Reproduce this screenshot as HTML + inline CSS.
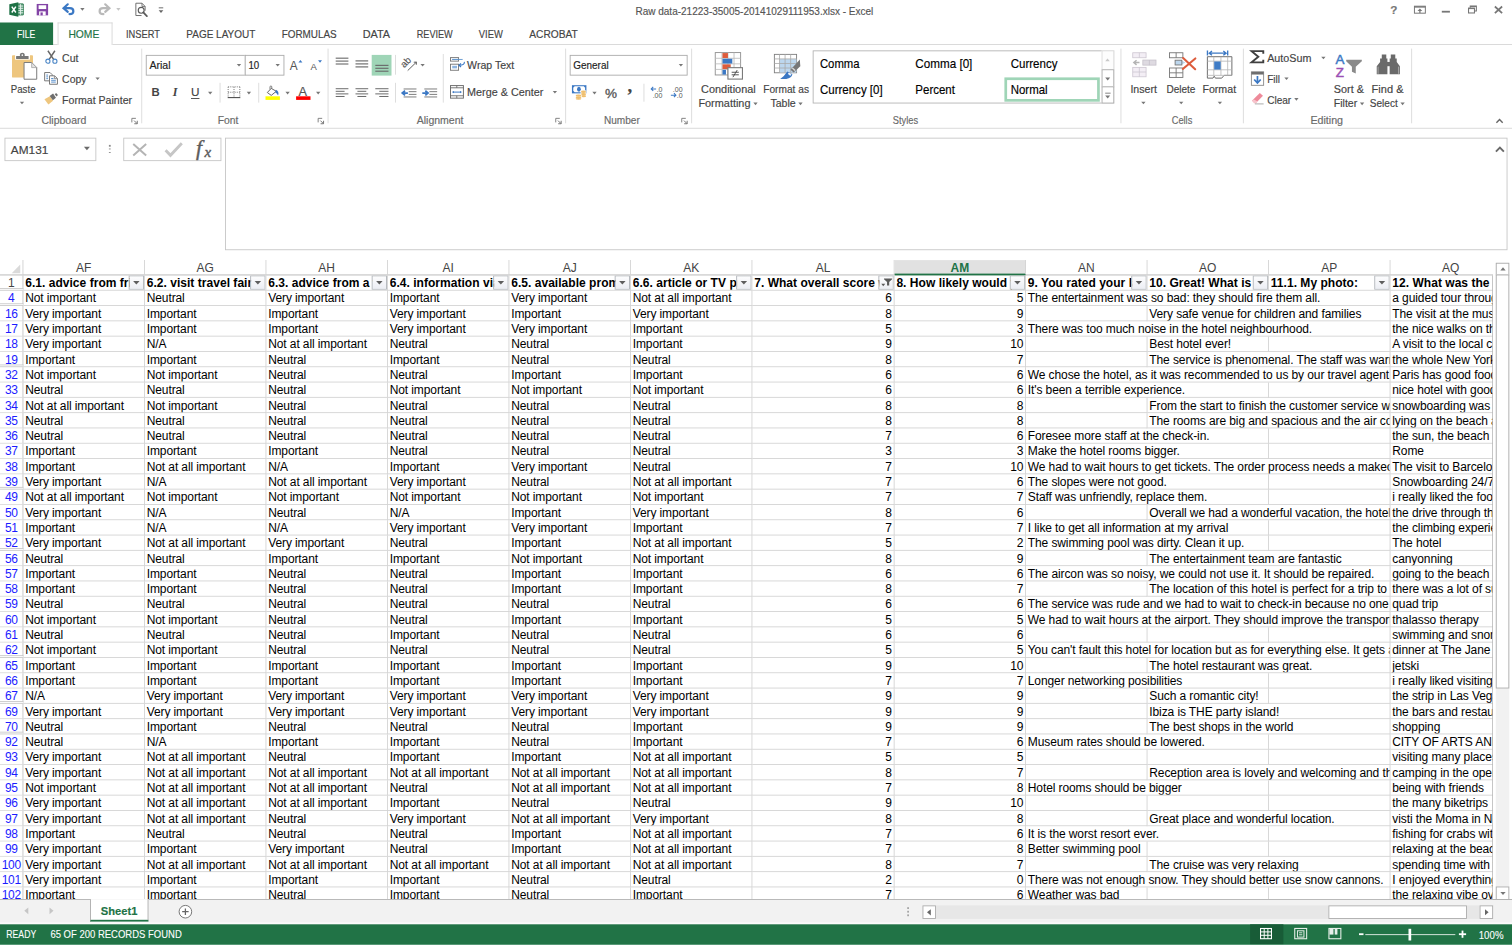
<!DOCTYPE html>
<html lang="en"><head><meta charset="utf-8"><title>Raw data-21223-35005-20141029111953.xlsx - Excel</title>
<style>
html,body{margin:0;padding:0;background:#fff;overflow:hidden}
body{width:1512px;height:945px;position:relative}
#app{position:absolute;left:0;top:0;width:1680px;height:1050px;transform:scale(0.9);transform-origin:0 0;background:#fff;font-family:"Liberation Sans",sans-serif;overflow:hidden}
.a{position:absolute}
.t{position:absolute;white-space:pre;line-height:1;-webkit-text-stroke:0.18px}
svg{overflow:visible}

.ch{box-sizing:border-box;border-right:1px solid #d4d4d4;border-bottom:1px solid #b4b4b4;font-size:13.33px;color:#444;text-align:center;line-height:18px}
.ch.sel{background:#e1e1e1;color:#217346;font-weight:bold;border-bottom:2px solid #217346}
.row{left:0;width:1680px;height:17px}
.rh{top:0;height:17px;box-sizing:border-box;border-right:1px solid #c4c4c4;border-bottom:1px solid #dcdcdc;font-size:13.33px;line-height:17px;text-align:center;color:#1c1cff;letter-spacing:-0.35px}
.rh.gap{border-bottom:3px double #cacaca}
.rh.one{color:#444}
.c{top:0;height:17px;box-sizing:border-box;border-right:1px solid #d4d4d4;border-bottom:1px solid #d4d4d4;font-size:13.33px;line-height:17px;color:#000;padding-left:2px;white-space:pre;overflow:hidden;letter-spacing:-0.11px}
.c.n{text-align:right;padding-right:2px}
.c.hd{font-weight:bold;letter-spacing:0.04px}
.ht{display:block;overflow:hidden;white-space:pre}
.fb{right:0;top:0;width:17px;height:16px;border:1px solid #b0b4ba;box-sizing:border-box;background:linear-gradient(#fdfdfe,#eceef4)}
.fb svg{display:block}
</style></head>
<body><div id="app">
<svg class="a" style="left:8.89px;top:1.11px" width="18.89" height="18.89" viewBox="8.00 1.00 17.00 17.00"><rect x="16.87" y="3.94" width="6.52" height="11.24" rx="0.6" fill="#5f9f7e" stroke="#1e7145" stroke-width="0.7"/><path d="M17.76 6.18L23.16 6.18M17.76 8.43L23.16 8.43M17.76 10.68L23.16 10.68M17.76 12.93L23.16 12.93M20.46 4.27L20.46 14.84" stroke="#e8f2ec" stroke-width="0.9" fill="none"/><polygon points="9.22,4.27 18.21,2.25 18.21,16.87 9.22,14.84" fill="#1e7145"/><path d="M11.69 6.75L15.74 12.59M15.74 6.75L11.69 12.59" stroke="#fff" stroke-width="1.5" fill="none"/></svg>
<svg class="a" style="left:40.00px;top:4.11px;" width="14.22" height="13.44" viewBox="0 0 14 14"><path d="M0.4 0.4H13.6V13.6H0.4Z" fill="#8344a6"/><rect x="2.6" y="1.9" width="8.8" height="4.4" fill="#fff"/><rect x="3.2" y="9" width="7.6" height="4.6" fill="#fff"/><rect x="4.8" y="10.2" width="2.6" height="3.4" fill="#8344a6"/></svg>
<svg class="a" style="left:68.89px;top:4.22px;" width="14.11" height="12.67" viewBox="0 0 14 13"><path d="M3.2 5.2H8.6C11.6 5.2 12.6 7.2 12.6 8.6C12.6 10.6 11 12 8.2 12" fill="none" stroke="#3b78c4" stroke-width="2.5" stroke-linecap="round"/><path d="M6.2 0.8L1.4 5.2L6.2 9.4" fill="none" stroke="#3b78c4" stroke-width="2.5" stroke-linecap="round" stroke-linejoin="miter"/></svg>
<svg class="a" style="left:89.11px;top:9.22px;" width="5.11" height="2.89" viewBox="0 0 10 6"><path d="M0 0H10L5 6Z" fill="#777"/></svg>
<svg class="a" style="left:108.89px;top:4.22px;" width="14.22" height="12.67" viewBox="0 0 14 13"><g transform="translate(14,0) scale(-1,1)"><path d="M3.2 5.2H8.6C11.6 5.2 12.6 7.2 12.6 8.6C12.6 10.6 11 12 8.2 12" fill="none" stroke="#b9b9b9" stroke-width="2.5" stroke-linecap="round"/><path d="M6.2 0.8L1.4 5.2L6.2 9.4" fill="none" stroke="#b9b9b9" stroke-width="2.5" stroke-linecap="round"/></g></svg>
<svg class="a" style="left:128.78px;top:9.22px;" width="5.11" height="2.89" viewBox="0 0 10 6"><path d="M0 0H10L5 6Z" fill="#c4c4c4"/></svg>
<svg class="a" style="left:149.67px;top:3.11px;" width="14.56" height="15.33" viewBox="0 0 14 15.5"><path d="M0.6 0.6H7.5L11 4.2V9M0.6 0.6V14.4H7" fill="none" stroke="#6e6e6e" stroke-width="1.1"/><path d="M7.5 0.6V4.2H11" fill="none" stroke="#6e6e6e" stroke-width="1"/><circle cx="6.6" cy="8.6" r="3.3" fill="#fff" stroke="#5a5a5a" stroke-width="1.3"/><path d="M9 11L13 15" stroke="#5a5a5a" stroke-width="2" stroke-linecap="round"/></svg>
<svg class="a" style="left:176.44px;top:7.78px;" width="5.78" height="7.11" viewBox="0 0 6 7"><rect x="0.4" y="0" width="5.2" height="1.1" fill="#666"/><path d="M0.3 3.2H5.7L3 6.4Z" fill="#666"/></svg>
<span class="t" style="left:706.33px;top:6.90px;font-size:12.00px;color:#555;transform:scaleX(0.9272);transform-origin:0 0;">Raw data-21223-35005-20141029111953.xlsx - Excel</span>
<span class="t" style="left:1544.67px;top:4.67px;font-size:13.00px;color:#777;font-weight:bold;">?</span>
<svg class="a" style="left:1571.11px;top:6.11px;" width="13.33" height="9.56" viewBox="0 0 13.4 9"><rect x="0.6" y="0.6" width="12.2" height="7.8" fill="none" stroke="#777" stroke-width="1.1"/><rect x="0.6" y="0.6" width="12.2" height="1.6" fill="#777"/><path d="M6.7 3.2L9.4 6H7.4V8.2H6V6H4Z" fill="#777"/></svg>
<div class="a " style="left:1602.22px;top:11.78px;width:9.11px;height:2.00px;background:#777"></div>
<svg class="a" style="left:1631.33px;top:6.22px;" width="10.00" height="9.22" viewBox="0 0 10 9.2"><path d="M2.6 2.6V0.8H9.4V6.2H7.4" fill="none" stroke="#777" stroke-width="1.2"/><rect x="0.7" y="3" width="6.6" height="5.4" fill="#fff" stroke="#777" stroke-width="1.2"/><rect x="0.7" y="2.8" width="6.6" height="1.3" fill="#777"/><rect x="2.6" y="0.6" width="6.8" height="1.2" fill="#777"/></svg>
<svg class="a" style="left:1660.44px;top:6.22px;" width="10.00" height="9.78" viewBox="0 0 9.3 8.6"><path d="M0.9 0.9L8.4 7.7M8.4 0.9L0.9 7.7" stroke="#777" stroke-width="1.8" fill="none"/></svg>
<div class="a " style="left:0.00px;top:49.00px;width:1680.00px;height:1.00px;background:#d6d6d6"></div>
<div class="a " style="left:0.00px;top:25.00px;width:58.89px;height:24.78px;background:#217346"></div>
<span class="t" style="left:19.44px;top:32.68px;font-size:11.27px;color:#fff;transform:scaleX(0.8400);transform-origin:0 0;">FILE</span>
<div class="a " style="left:63.56px;top:25.00px;width:61.11px;height:25.22px;background:#fff;border:1px solid #d6d6d6;border-bottom:none;box-sizing:border-box"></div>
<span class="t" style="left:76.44px;top:31.68px;font-size:12.00px;color:#217346;transform:scaleX(0.9537);transform-origin:0 0;">HOME</span>
<span class="t" style="left:139.78px;top:31.68px;font-size:12.00px;color:#444;transform:scaleX(0.8602);transform-origin:0 0;">INSERT</span>
<span class="t" style="left:206.89px;top:31.68px;font-size:12.00px;color:#444;transform:scaleX(0.9247);transform-origin:0 0;">PAGE LAYOUT</span>
<span class="t" style="left:312.89px;top:31.68px;font-size:12.00px;color:#444;transform:scaleX(0.9165);transform-origin:0 0;">FORMULAS</span>
<span class="t" style="left:402.89px;top:31.68px;font-size:12.00px;color:#444;transform:scaleX(1.0073);transform-origin:0 0;">DATA</span>
<span class="t" style="left:462.89px;top:31.68px;font-size:12.00px;color:#444;transform:scaleX(0.8450);transform-origin:0 0;">REVIEW</span>
<span class="t" style="left:531.78px;top:31.68px;font-size:12.00px;color:#444;transform:scaleX(0.8695);transform-origin:0 0;">VIEW</span>
<span class="t" style="left:587.78px;top:31.68px;font-size:12.00px;color:#444;transform:scaleX(0.9454);transform-origin:0 0;">ACROBAT</span>
<div class="a " style="left:0.00px;top:142.11px;width:1680.00px;height:1.11px;background:#d6d6d6"></div>
<svg class="a" style="left:11.11px;top:55.56px" width="32.22" height="34.44" viewBox="10.00 50.00 29.00 31.00"><rect x="12.11" y="54.80" width="20.99" height="22.35" rx="0.9" fill="#eec67e"/><rect x="15.16" y="54.13" width="14.90" height="5.08" fill="#fff"/><rect x="16.17" y="55.48" width="12.53" height="3.05" rx="0.5" fill="#777"/><path d="M20.03 56.16L20.03 53.99Q20.03 52.43 22.40 52.43Q24.77 52.43 24.77 53.99L24.77 56.16" fill="#777"/><circle cx="22.40" cy="54.67" r="0.85" fill="#fff"/><polygon points="24.16,62.12 31.75,62.12 36.83,67.20 36.83,78.84 24.16,78.84" fill="#fff" stroke="#7a7a7a" stroke-width="1"/><polygon points="31.75,62.12 31.75,67.20 36.83,67.20" fill="#e4e4e4" stroke="#9a9a9a" stroke-width="0.7"/></svg>
<span class="t" style="left:11.78px;top:92.56px;font-size:12.00px;color:#444;transform:scaleX(0.8944);transform-origin:0 0;">Paste</span>
<svg class="a" style="left:22.00px;top:113.33px;" width="4.89" height="2.89" viewBox="0 0 10 6"><path d="M0 0H10L5 6Z" fill="#777"/></svg>
<svg class="a" style="left:50.00px;top:56.33px;" width="14.22" height="14.78" viewBox="0 0 14.2 14.8"><path d="M3.2 0.4L9.6 10M11 0.4L4.6 10" stroke="#666" stroke-width="1.6" fill="none"/><circle cx="3.2" cy="12" r="2.3" fill="none" stroke="#4b86c6" stroke-width="1.2"/><circle cx="11" cy="12" r="2.3" fill="none" stroke="#4b86c6" stroke-width="1.2"/></svg>
<span class="t" style="left:68.56px;top:58.68px;font-size:12.00px;color:#444;transform:scaleX(0.9758);transform-origin:0 0;">Cut</span>
<svg class="a" style="left:48.78px;top:79.78px;" width="15.44" height="14.22" viewBox="0 0 15.4 14.2"><path d="M0.6 0.6H6.6L9 3V9.8H0.6Z" fill="#fff" stroke="#777" stroke-width="1.1"/><path d="M2.4 3.4H4.4M2.4 5.4H4.4M2.4 7.4H4.4" stroke="#4b86c6" stroke-width="1"/><path d="M6 4.2H11.6L14.8 7.2V13.6H6Z" fill="#fff" stroke="#777" stroke-width="1.1"/><path d="M11.4 4.4V7.4H14.6" fill="none" stroke="#777" stroke-width="0.9"/><path d="M7.8 7.2H10.4M7.8 9.2H13M7.8 11.2H13" stroke="#4b86c6" stroke-width="1"/></svg>
<span class="t" style="left:68.56px;top:81.90px;font-size:12.00px;color:#444;transform:scaleX(0.9678);transform-origin:0 0;">Copy</span>
<svg class="a" style="left:106.11px;top:86.11px;" width="4.89" height="2.89" viewBox="0 0 10 6"><path d="M0 0H10L5 6Z" fill="#777"/></svg>
<svg class="a" style="left:49.33px;top:103.22px;" width="15.89" height="13.33" viewBox="0 0 15.9 13.3"><path d="M0.4 7.2L6.4 4L10 9L4.8 13.2Z" fill="#eec67e"/><path d="M6.2 3.6L10 1L13.2 5.6L9.8 8.4Z" fill="#6e6e6e"/><path d="M11.8 1.8L13.4 0.4L15.4 2.6L13.8 4.2Z" fill="#6e6e6e"/></svg>
<span class="t" style="left:68.56px;top:104.90px;font-size:12.00px;color:#444;transform:scaleX(0.9800);transform-origin:0 0;">Format Painter</span>
<span class="t" style="left:45.67px;top:128.89px;font-size:11.20px;color:#6a6a6a;transform:scaleX(1.0429);transform-origin:0 0;">Clipboard</span>
<svg class="a" style="left:145.89px;top:131.33px;" width="7.00" height="7.00" viewBox="0 0 7 7"><path d="M0.5 5V0.5H5" fill="none" stroke="#777" stroke-width="1"/><path d="M3 3L6.4 6.4M6.5 3.2V6.5H3.2" fill="none" stroke="#777" stroke-width="1.1"/></svg>
<div class="a " style="left:156.94px;top:54.44px;width:1.00px;height:82.67px;background:#dadada"></div>
<div class="a " style="left:162.22px;top:61.33px;width:110.67px;height:22.56px;border:1px solid #ababab;box-sizing:border-box;background:#fff"></div>
<div class="a " style="left:271.78px;top:61.33px;width:44.00px;height:22.56px;border:1px solid #ababab;box-sizing:border-box;background:#fff"></div>
<span class="t" style="left:165.56px;top:66.79px;font-size:12.00px;color:#222;transform:scaleX(0.9812);transform-origin:0 0;">Arial</span>
<svg class="a" style="left:262.89px;top:71.11px;" width="5.11" height="2.89" viewBox="0 0 10 6"><path d="M0 0H10L5 6Z" fill="#777"/></svg>
<span class="t" style="left:275.78px;top:66.79px;font-size:12.00px;color:#222;transform:scaleX(0.8990);transform-origin:0 0;">10</span>
<svg class="a" style="left:305.89px;top:71.11px;" width="5.11" height="2.89" viewBox="0 0 10 6"><path d="M0 0H10L5 6Z" fill="#777"/></svg>
<svg class="a" style="left:322.22px;top:65.56px;" width="14.00" height="12.22" viewBox="0 0 14 12.2"><text x="0" y="12" font-size="13.2" fill="#555" font-family="Liberation Sans,sans-serif">A</text><path d="M9.6 3.4L11.8 0.6L14 3.4Z" fill="#3b78c4"/></svg>
<svg class="a" style="left:344.89px;top:65.56px;" width="12.89" height="12.22" viewBox="0 0 12.9 12.2"><text x="0" y="12" font-size="10.6" fill="#555" font-family="Liberation Sans,sans-serif">A</text><path d="M8.4 0.8H12.8L10.6 3.6Z" fill="#3b78c4"/></svg>
<span class="t" style="left:168.44px;top:96.57px;font-size:12.60px;color:#444;font-weight:bold;-webkit-text-stroke:0">B</span>
<span class="t" style="left:192.00px;top:95.57px;font-size:13.40px;color:#444;font-family:'Liberation Serif',serif;font-weight:bold;font-style:italic;-webkit-text-stroke:0">I</span>
<span class="t" style="left:212.22px;top:95.56px;font-size:13.00px;color:#444;text-decoration:underline;text-underline-offset:1.5px">U</span>
<svg class="a" style="left:230.89px;top:102.11px;" width="5.11" height="2.89" viewBox="0 0 10 6"><path d="M0 0H10L5 6Z" fill="#777"/></svg>
<div class="a " style="left:243.94px;top:92.22px;width:1.00px;height:21.33px;background:#dadada"></div>
<svg class="a" style="left:252.56px;top:95.67px;" width="14.00" height="13.00" viewBox="0 0 14 13"><path d="M0.5 0.5H13.5M0.5 6.5H13.5M0.5 0.5V12M7 0.5V12M13.5 0.5V12" fill="none" stroke="#787878" stroke-width="1.1" stroke-dasharray="1.1 1.3"/><path d="M0 12.4H14" stroke="#555" stroke-width="1.3"/></svg>
<svg class="a" style="left:273.89px;top:102.11px;" width="5.11" height="2.89" viewBox="0 0 10 6"><path d="M0 0H10L5 6Z" fill="#777"/></svg>
<div class="a " style="left:286.61px;top:92.22px;width:1.00px;height:21.33px;background:#dadada"></div>
<svg class="a" style="left:296.44px;top:94.89px;" width="14.89" height="11.33" viewBox="0 0 14.9 11.3"><path d="M5.4 3.2L1 7.8L5.4 11L11 6.4Z" fill="#fff" stroke="#666" stroke-width="1.1" stroke-linejoin="round"/><path d="M4 4.4V1.6Q4 0.5 5 0.5Q6 0.5 6 1.6V3.4" fill="none" stroke="#666" stroke-width="0.9"/><path d="M10.6 4.6Q14.6 6.6 13 11Q11.6 8.6 9.8 7.4Z" fill="#3b78c4"/></svg>
<div class="a " style="left:294.89px;top:106.89px;width:16.22px;height:3.78px;background:#ffff00"></div>
<svg class="a" style="left:317.00px;top:102.11px;" width="5.11" height="2.89" viewBox="0 0 10 6"><path d="M0 0H10L5 6Z" fill="#777"/></svg>
<span class="t" style="left:331.78px;top:95.12px;font-size:14.20px;color:#555;">A</span>
<div class="a " style="left:329.00px;top:106.89px;width:16.11px;height:3.78px;background:#ff0000"></div>
<svg class="a" style="left:351.00px;top:102.11px;" width="5.11" height="2.89" viewBox="0 0 10 6"><path d="M0 0H10L5 6Z" fill="#777"/></svg>
<span class="t" style="left:242.00px;top:128.89px;font-size:11.20px;color:#6a6a6a;transform:scaleX(1.0263);transform-origin:0 0;">Font</span>
<svg class="a" style="left:353.11px;top:131.33px;" width="7.00" height="7.00" viewBox="0 0 7 7"><path d="M0.5 5V0.5H5" fill="none" stroke="#777" stroke-width="1"/><path d="M3 3L6.4 6.4M6.5 3.2V6.5H3.2" fill="none" stroke="#777" stroke-width="1.1"/></svg>
<div class="a " style="left:363.94px;top:54.44px;width:1.00px;height:82.67px;background:#dadada"></div>
<svg class="a" style="left:373.11px;top:63.56px" width="14.11" height="7.78" viewBox="0 0 100 24.0" preserveAspectRatio="none"><path d="M0.0 2.0H100.0" stroke="#6c6c6c" stroke-width="3.9"/><path d="M0.0 12.0H100.0" stroke="#6c6c6c" stroke-width="3.9"/><path d="M0.0 22.0H100.0" stroke="#6c6c6c" stroke-width="3.9"/></svg>
<svg class="a" style="left:394.67px;top:67.44px" width="14.11" height="8.00" viewBox="0 0 100 24.0" preserveAspectRatio="none"><path d="M0.0 2.0H100.0" stroke="#6c6c6c" stroke-width="3.9"/><path d="M0.0 12.0H100.0" stroke="#6c6c6c" stroke-width="3.9"/><path d="M0.0 22.0H100.0" stroke="#6c6c6c" stroke-width="3.9"/></svg>
<div class="a " style="left:412.78px;top:60.89px;width:22.44px;height:23.22px;background:#9fd5b7"></div>
<svg class="a" style="left:416.67px;top:72.44px" width="14.67" height="7.78" viewBox="0 0 100 24.0" preserveAspectRatio="none"><path d="M0.0 2.0H100.0" stroke="#6a6a6a" stroke-width="3.9"/><path d="M0.0 12.0H100.0" stroke="#6a6a6a" stroke-width="3.9"/><path d="M0.0 22.0H100.0" stroke="#6a6a6a" stroke-width="3.9"/></svg>
<div class="a " style="left:439.06px;top:61.22px;width:1.00px;height:22.11px;background:#dadada"></div>
<svg class="a" style="left:444.44px;top:60.00px" width="22.22" height="22.22" viewBox="400.00 54.00 20.00 20.00"><text x="0" y="0" transform="translate(404.69,68.17) rotate(-45)" font-size="9.6" fill="#555" stroke="#555" stroke-width="0.15" style="font-family:'Liberation Sans',sans-serif">ab</text><path d="M408.11 70.57L416.69 62.23M414.17 62.23L416.80 62.11 416.69 64.74" stroke="#555" stroke-width="0.95" fill="none"/></svg>
<svg class="a" style="left:467.00px;top:70.78px;" width="5.11" height="2.89" viewBox="0 0 10 6"><path d="M0 0H10L5 6Z" fill="#777"/></svg>
<div class="a " style="left:492.06px;top:60.33px;width:1.00px;height:53.78px;background:#dadada"></div>
<svg class="a" style="left:498.89px;top:62.22px" width="20.00" height="17.78" viewBox="449.00 56.00 18.00 16.00"><rect x="450.40" y="57.83" width="8.06" height="3.49" fill="#fff" stroke="#727272" stroke-width="0.9"/><rect x="452.00" y="59.03" width="6.29" height="1.26" fill="#c5daf0"/><path d="M452.00 59.66L462.57 59.66" stroke="#4b86c6" stroke-width="0.8"/><rect x="450.40" y="64.40" width="8.06" height="6.06" fill="#fff" stroke="#727272" stroke-width="0.9"/><rect x="452.11" y="66.00" width="4.80" height="2.57" fill="#8db4e0"/><path d="M464.29 62.11Q464.69 65.31 459.31 65.43" stroke="#3b78c4" stroke-width="1.1" fill="none"/><path d="M460.91 63.71L458.97 65.43 460.91 67.14" stroke="#3b78c4" stroke-width="1.2" fill="none"/></svg>
<span class="t" style="left:519.44px;top:66.79px;font-size:12.00px;color:#444;transform:scaleX(0.9788);transform-origin:0 0;">Wrap Text</span>
<svg class="a" style="left:373.11px;top:98.00px" width="14.11" height="9.78" viewBox="0 0 100 34.0" preserveAspectRatio="none"><path d="M0.0 2.0H100.0" stroke="#6c6c6c" stroke-width="3.9"/><path d="M0.0 12.0H70.0" stroke="#6c6c6c" stroke-width="3.9"/><path d="M0.0 22.0H100.0" stroke="#6c6c6c" stroke-width="3.9"/><path d="M0.0 32.0H70.0" stroke="#6c6c6c" stroke-width="3.9"/></svg>
<svg class="a" style="left:394.67px;top:98.00px" width="14.11" height="9.78" viewBox="0 0 100 34.0" preserveAspectRatio="none"><path d="M0.0 2.0H100.0" stroke="#6c6c6c" stroke-width="3.9"/><path d="M15.0 12.0H85.0" stroke="#6c6c6c" stroke-width="3.9"/><path d="M0.0 22.0H100.0" stroke="#6c6c6c" stroke-width="3.9"/><path d="M15.0 32.0H85.0" stroke="#6c6c6c" stroke-width="3.9"/></svg>
<svg class="a" style="left:416.67px;top:98.00px" width="14.67" height="9.78" viewBox="0 0 100 34.0" preserveAspectRatio="none"><path d="M0.0 2.0H100.0" stroke="#6c6c6c" stroke-width="3.9"/><path d="M30.0 12.0H100.0" stroke="#6c6c6c" stroke-width="3.9"/><path d="M0.0 22.0H100.0" stroke="#6c6c6c" stroke-width="3.9"/><path d="M30.0 32.0H100.0" stroke="#6c6c6c" stroke-width="3.9"/></svg>
<div class="a " style="left:439.06px;top:92.11px;width:1.00px;height:22.00px;background:#dadada"></div>
<svg class="a" style="left:444.44px;top:95.56px" width="21.11" height="14.44" viewBox="400.00 86.00 19.00 13.00"><path d="M404.00 88.57L416.86 88.57M409.14 91.26L416.86 91.26M409.14 94.00L416.86 94.00M404.00 96.57L416.86 96.57" stroke="#777" stroke-width="0.95" fill="none"/><path d="M408.29 92.63L402.74 92.63M405.43 90.34L402.63 92.63 405.43 94.91" stroke="#3b78c4" stroke-width="1.7" fill="none"/></svg>
<svg class="a" style="left:466.67px;top:95.56px" width="21.11" height="14.44" viewBox="420.00 86.00 19.00 13.00"><path d="M424.00 88.57L436.86 88.57M429.14 91.26L436.86 91.26M429.14 94.00L436.86 94.00M424.00 96.57L436.86 96.57" stroke="#777" stroke-width="0.95" fill="none"/><path d="M422.00 92.63L427.54 92.63M425.03 90.34L427.77 92.63 425.03 94.91" stroke="#3b78c4" stroke-width="1.7" fill="none"/></svg>
<svg class="a" style="left:498.89px;top:93.33px" width="17.78" height="17.78" viewBox="449.00 84.00 16.00 16.00"><rect x="450.40" y="85.89" width="12.91" height="12.57" fill="#fff" stroke="#6a6a6a" stroke-width="0.95"/><path d="M450.40 88.11L463.31 88.11M450.40 96.06L463.31 96.06M456.69 85.89L456.69 88.11M456.69 96.06L456.69 98.46" stroke="#6a6a6a" stroke-width="0.9" fill="none"/><path d="M452.57 92.40L461.14 92.40" stroke="#3b78c4" stroke-width="1" fill="none"/><polygon points="452.00,92.40 453.83,91.26 453.83,93.54" fill="#3b78c4"/><polygon points="461.71,92.40 459.89,91.26 459.89,93.54" fill="#3b78c4"/></svg>
<span class="t" style="left:519.44px;top:97.45px;font-size:12.00px;color:#444;transform:scaleX(0.9995);transform-origin:0 0;">Merge &amp; Center</span>
<svg class="a" style="left:614.00px;top:101.44px;" width="5.11" height="2.89" viewBox="0 0 10 6"><path d="M0 0H10L5 6Z" fill="#777"/></svg>
<span class="t" style="left:462.56px;top:128.89px;font-size:11.20px;color:#6a6a6a;transform:scaleX(1.0441);transform-origin:0 0;">Alignment</span>
<svg class="a" style="left:616.78px;top:131.33px;" width="7.00" height="7.00" viewBox="0 0 7 7"><path d="M0.5 5V0.5H5" fill="none" stroke="#777" stroke-width="1"/><path d="M3 3L6.4 6.4M6.5 3.2V6.5H3.2" fill="none" stroke="#777" stroke-width="1.1"/></svg>
<div class="a " style="left:628.06px;top:54.44px;width:1.00px;height:82.67px;background:#dadada"></div>
<div class="a " style="left:633.22px;top:61.33px;width:130.78px;height:22.44px;border:1px solid #ababab;box-sizing:border-box;background:#fff"></div>
<span class="t" style="left:636.56px;top:66.79px;font-size:12.00px;color:#222;transform:scaleX(0.9187);transform-origin:0 0;">General</span>
<svg class="a" style="left:753.67px;top:71.11px;" width="5.11" height="2.89" viewBox="0 0 10 6"><path d="M0 0H10L5 6Z" fill="#777"/></svg>
<svg class="a" style="left:634.44px;top:93.33px" width="20.00" height="18.89" viewBox="571.00 84.00 18.00 17.00"><rect x="572.33" y="85.50" width="14.50" height="8.17" fill="#3b78c4"/><polygon points="575.00,86.67 584.17,86.67 585.50,88.00 585.50,91.17 584.17,92.50 575.00,92.50 573.67,91.17 573.67,88.00" fill="#fff"/><ellipse cx="579.33" cy="89.50" rx="1.9" ry="2.5" fill="#3b78c4"/><rect x="581.00" y="90.67" width="5.75" height="6.83" fill="#fff"/><ellipse cx="583.88" cy="91.67" rx="2.62" ry="0.95" fill="#efbf6f"/><ellipse cx="583.88" cy="93.33" rx="2.62" ry="0.95" fill="#efbf6f"/><ellipse cx="583.88" cy="95.00" rx="2.62" ry="0.95" fill="#efbf6f"/><ellipse cx="583.88" cy="96.50" rx="2.62" ry="0.95" fill="#efbf6f"/><rect x="575.75" y="94.83" width="6.33" height="5.33" fill="#fff"/><ellipse cx="578.92" cy="95.83" rx="2.92" ry="0.95" fill="#efbf6f"/><ellipse cx="578.92" cy="97.50" rx="2.92" ry="0.95" fill="#efbf6f"/><ellipse cx="578.92" cy="99.17" rx="2.92" ry="0.95" fill="#efbf6f"/></svg>
<svg class="a" style="left:658.22px;top:102.11px;" width="5.11" height="2.89" viewBox="0 0 10 6"><path d="M0 0H10L5 6Z" fill="#777"/></svg>
<span class="t" style="left:672.22px;top:95.78px;font-size:15.00px;color:#555;-webkit-text-stroke:0.35px">%</span>
<span class="t" style="left:697.11px;top:85.22px;font-size:21.00px;color:#444;font-family:'Liberation Serif',serif;font-weight:bold;">,</span>
<div class="a " style="left:715.39px;top:93.00px;width:1.00px;height:20.22px;background:#dadada"></div>
<svg class="a" style="left:723.22px;top:96.33px;" width="14.00" height="13.00" viewBox="0 0 14 13"><path d="M0.6 2.8H6M2.8 0.6L0.6 2.8L2.8 5" fill="none" stroke="#3b78c4" stroke-width="1.2"/><text x="6.6" y="6" font-size="7.8" font-family="Liberation Sans,sans-serif" fill="#555">.0</text><text x="2.2" y="12.6" font-size="7.8" font-family="Liberation Sans,sans-serif" fill="#555">.00</text></svg>
<svg class="a" style="left:745.22px;top:96.33px;" width="14.00" height="13.00" viewBox="0 0 14 13"><text x="2.6" y="6" font-size="7.8" font-family="Liberation Sans,sans-serif" fill="#555">.00</text><path d="M0.4 9.8H6M3.8 7.6L6 9.8L3.8 12" fill="none" stroke="#3b78c4" stroke-width="1.2"/><text x="7" y="12.6" font-size="7.8" font-family="Liberation Sans,sans-serif" fill="#555">.0</text></svg>
<span class="t" style="left:670.89px;top:128.89px;font-size:11.20px;color:#6a6a6a;transform:scaleX(1.0013);transform-origin:0 0;">Number</span>
<svg class="a" style="left:756.67px;top:131.33px;" width="7.00" height="7.00" viewBox="0 0 7 7"><path d="M0.5 5V0.5H5" fill="none" stroke="#777" stroke-width="1"/><path d="M3 3L6.4 6.4M6.5 3.2V6.5H3.2" fill="none" stroke="#777" stroke-width="1.1"/></svg>
<div class="a " style="left:767.72px;top:54.44px;width:1.00px;height:82.67px;background:#dadada"></div>
<svg class="a" style="left:792.22px;top:55.56px" width="36.67" height="34.44" viewBox="713.00 50.00 33.00 31.00"><rect x="715.44" y="52.19" width="25.40" height="22.38" fill="#fff" stroke="#8e8e8e" stroke-width="0.9"/><path d="M715.44 57.90L740.84 57.90M715.44 63.46L740.84 63.46M715.44 69.02L740.84 69.02M722.19 52.19L722.19 74.57M728.14 52.19L728.14 74.57M734.25 52.19L734.25 74.57" stroke="#b9b9b9" stroke-width="0.8" fill="none"/><rect x="722.67" y="52.67" width="5.48" height="4.92" fill="#dd5c3c"/><rect x="722.67" y="58.38" width="9.84" height="4.76" fill="#3b78c4"/><rect x="722.67" y="63.94" width="8.25" height="4.76" fill="#dd5c3c"/><rect x="722.67" y="69.49" width="3.49" height="4.68" fill="#3b78c4"/><rect x="728.14" y="67.27" width="14.52" height="11.43" fill="#fff" stroke="#7a7a7a" stroke-width="1.1"/><path d="M731.87 71.87L739.02 71.87M731.87 74.41L739.02 74.41M737.43 69.65L733.14 76.79" stroke="#444" stroke-width="0.9" fill="none"/></svg>
<span class="t" style="left:778.67px;top:93.13px;font-size:12.00px;color:#444;transform:scaleX(1.0104);transform-origin:0 0;">Conditional</span>
<span class="t" style="left:775.56px;top:108.68px;font-size:12.00px;color:#444;transform:scaleX(1.0093);transform-origin:0 0;">Formatting</span>
<svg class="a" style="left:836.78px;top:113.67px;" width="4.89" height="2.89" viewBox="0 0 10 6"><path d="M0 0H10L5 6Z" fill="#777"/></svg>
<svg class="a" style="left:857.78px;top:57.78px" width="33.33" height="32.22" viewBox="772.00 52.00 30.00 29.00"><rect x="774.17" y="54.17" width="22.22" height="18.41" fill="#fff" stroke="#7e7e7e" stroke-width="0.9"/><rect x="779.49" y="58.86" width="16.67" height="13.49" fill="#bdd7ee"/><path d="M774.17 58.70L796.40 58.70M774.17 63.30L796.40 63.30M774.17 67.83L796.40 67.83M779.33 54.17L779.33 72.59M784.89 54.17L784.89 72.59M790.44 54.17L790.44 72.59" stroke="#a9a9a9" stroke-width="0.8" fill="none"/><polygon points="799.65,59.33 800.13,66.00 793.46,72.35 790.29,69.49" fill="#777"/><polygon points="792.67,67.27 795.37,69.81 794.41,70.76 791.71,68.22" fill="#d8d8d8"/><path d="M787.11 71.24L792.19 73.94Q791.63 77.75 786.08 78.70L779.97 78.70Q783.70 76.56 787.11 71.24" fill="#3b78c4"/><ellipse cx="789.49" cy="73.94" rx="1.9" ry="1.0" transform="rotate(38 789.49 73.94)" fill="#fff" opacity="0.9"/></svg>
<span class="t" style="left:847.67px;top:93.13px;font-size:12.00px;color:#444;transform:scaleX(0.9422);transform-origin:0 0;">Format as</span>
<span class="t" style="left:855.78px;top:108.68px;font-size:12.00px;color:#444;transform:scaleX(0.9799);transform-origin:0 0;">Table</span>
<svg class="a" style="left:886.78px;top:113.67px;" width="4.89" height="2.89" viewBox="0 0 10 6"><path d="M0 0H10L5 6Z" fill="#777"/></svg>
<div class="a " style="left:903.11px;top:55.89px;width:334.44px;height:59.56px;border:1px solid #b4b4b4;box-sizing:border-box;background:#fff"></div>
<span class="t" style="left:911.44px;top:64.13px;font-size:14.40px;color:#000;transform:scaleX(0.8751);transform-origin:0 0;">Comma</span>
<span class="t" style="left:1017.00px;top:64.13px;font-size:14.40px;color:#000;transform:scaleX(0.9010);transform-origin:0 0;">Comma [0]</span>
<span class="t" style="left:1122.89px;top:64.13px;font-size:14.40px;color:#000;transform:scaleX(0.8901);transform-origin:0 0;">Currency</span>
<span class="t" style="left:911.44px;top:91.68px;font-size:14.40px;color:#000;transform:scaleX(0.8897);transform-origin:0 0;">Currency [0]</span>
<span class="t" style="left:1017.00px;top:91.68px;font-size:14.40px;color:#000;transform:scaleX(0.8888);transform-origin:0 0;">Percent</span>
<div class="a " style="left:1116.44px;top:86.00px;width:105.33px;height:27.44px;border:3px solid #9fd5b7;box-sizing:border-box"></div>
<span class="t" style="left:1122.89px;top:91.68px;font-size:14.40px;color:#000;transform:scaleX(0.8835);transform-origin:0 0;">Normal</span>
<div class="a " style="left:1223.89px;top:55.89px;width:13.67px;height:21.67px;border:1px solid #dcdcdc;box-sizing:border-box;background:#fdfdfd"></div>
<div class="a " style="left:1223.89px;top:76.56px;width:13.67px;height:20.11px;border:1px solid #ababab;box-sizing:border-box;background:#fff"></div>
<div class="a " style="left:1223.89px;top:95.67px;width:13.67px;height:19.78px;border:1px solid #ababab;box-sizing:border-box;background:#fff"></div>
<svg class="a" style="left:1228.22px;top:65.11px;" width="5.11" height="3.11" viewBox="0 0 10 6"><path d="M0 6H10L5 0Z" fill="#c8c8c8"/></svg>
<svg class="a" style="left:1228.00px;top:85.67px;" width="5.56" height="3.33" viewBox="0 0 10 6"><path d="M0 0H10L5 6Z" fill="#777"/></svg>
<div class="a " style="left:1228.00px;top:102.67px;width:5.56px;height:1.00px;background:#777"></div>
<svg class="a" style="left:1228.00px;top:105.78px;" width="5.56" height="3.33" viewBox="0 0 10 6"><path d="M0 0H10L5 6Z" fill="#777"/></svg>
<span class="t" style="left:992.22px;top:128.89px;font-size:11.20px;color:#6a6a6a;transform:scaleX(0.9217);transform-origin:0 0;">Styles</span>
<div class="a " style="left:1244.94px;top:54.44px;width:1.00px;height:82.67px;background:#dadada"></div>
<svg class="a" style="left:1255.56px;top:55.56px" width="31.11" height="32.22" viewBox="1130.00 50.00 28.00 29.00"><rect x="1132.35" y="52.35" width="13.33" height="5.00" fill="#f3eef5" stroke="#cdc6d1" stroke-width="0.8"/><path d="M1138.94 52.35L1138.94 57.35" stroke="#cdc6d1" stroke-width="0.8"/><rect x="1142.43" y="59.65" width="13.17" height="5.08" fill="#dedae1" stroke="#c6c0ca" stroke-width="0.8"/><path d="M1149.02 59.65L1149.02 64.73" stroke="#c6c0ca" stroke-width="0.8"/><rect x="1132.35" y="66.95" width="13.33" height="9.44" fill="#f3eef5" stroke="#cdc6d1" stroke-width="0.8"/><path d="M1138.94 66.95L1138.94 76.40M1132.35 71.63L1145.68 71.63" stroke="#cdc6d1" stroke-width="0.8"/><path d="M1139.10 62.11L1133.54 62.11M1136.16 59.81L1133.46 62.11 1136.16 64.41" stroke="#b4b4b4" stroke-width="1.5" fill="none"/></svg>
<span class="t" style="left:1255.67px;top:93.13px;font-size:12.00px;color:#444;transform:scaleX(0.9811);transform-origin:0 0;">Insert</span>
<svg class="a" style="left:1268.00px;top:112.89px;" width="4.89" height="2.89" viewBox="0 0 10 6"><path d="M0 0H10L5 6Z" fill="#777"/></svg>
<svg class="a" style="left:1296.67px;top:55.56px" width="34.44" height="32.22" viewBox="1167.00 50.00 31.00 29.00"><rect x="1169.25" y="52.35" width="13.33" height="5.00" fill="#fff" stroke="#767676" stroke-width="0.9"/><path d="M1175.84 52.35L1175.84 57.35" stroke="#767676" stroke-width="0.9"/><rect x="1169.25" y="67.59" width="13.33" height="9.44" fill="#fff" stroke="#767676" stroke-width="0.9"/><path d="M1175.84 67.59L1175.84 77.03M1169.25 72.43L1182.59 72.43" stroke="#767676" stroke-width="0.9"/><polygon points="1181.56,60.29 1185.13,62.19 1181.56,64.10" fill="#bdd7ee"/><rect x="1174.81" y="59.81" width="6.75" height="4.76" fill="#bdd7ee" stroke="#767676" stroke-width="0.9"/><path d="M1182.83 57.59L1194.89 68.86M1195.05 58.06L1182.51 68.54" stroke="#dd5c3c" stroke-width="2.1" fill="none" stroke-linecap="round"/></svg>
<span class="t" style="left:1296.44px;top:93.13px;font-size:12.00px;color:#444;transform:scaleX(0.9289);transform-origin:0 0;">Delete</span>
<svg class="a" style="left:1310.11px;top:112.89px;" width="4.89" height="2.89" viewBox="0 0 10 6"><path d="M0 0H10L5 6Z" fill="#777"/></svg>
<svg class="a" style="left:1338.89px;top:54.44px" width="33.33" height="34.44" viewBox="1205.00 49.00 30.00 31.00"><path d="M1207.35 50.92L1207.35 56.00M1227.59 50.92L1227.59 56.00M1209.33 53.54L1225.84 53.54M1211.87 51.40L1209.17 53.54 1211.87 55.68M1223.22 51.40L1226.00 53.54 1223.22 55.68" stroke="#3b78c4" stroke-width="1.35" fill="none"/><polygon points="1207.27,57.11 1231.79,57.11 1231.79,75.76 1224.02,75.76 1221.63,78.54 1215.29,78.54 1214.10,76.56 1212.90,78.54 1207.27,78.54" fill="#fff" stroke="#6e6e6e" stroke-width="1"/><path d="M1207.27 61.56L1231.79 61.56M1207.27 70.21L1231.79 70.21M1207.27 75.76L1231.79 75.76M1213.70 57.11L1213.70 75.76M1220.84 57.11L1220.84 75.76M1227.59 57.11L1227.59 75.76" stroke="#b4b4b4" stroke-width="0.8" fill="none"/><rect x="1214.10" y="61.87" width="6.51" height="8.10" fill="#3f7cc6"/></svg>
<span class="t" style="left:1336.22px;top:93.13px;font-size:12.00px;color:#444;transform:scaleX(0.9852);transform-origin:0 0;">Format</span>
<svg class="a" style="left:1352.67px;top:112.89px;" width="4.89" height="2.89" viewBox="0 0 10 6"><path d="M0 0H10L5 6Z" fill="#777"/></svg>
<span class="t" style="left:1301.67px;top:128.89px;font-size:11.20px;color:#6a6a6a;transform:scaleX(0.9150);transform-origin:0 0;">Cells</span>
<div class="a " style="left:1381.17px;top:54.44px;width:1.00px;height:82.67px;background:#dadada"></div>
<svg class="a" style="left:1387.78px;top:54.44px" width="18.89" height="18.89" viewBox="1249.00 49.00 17.00 17.00"><path d="M1263.09 54.10L1263.09 51.51 1251.40 51.51 1258.14 57.24 1251.40 62.75 1263.09 62.75 1263.09 60.17" fill="none" stroke="#404040" stroke-width="1.9" stroke-linejoin="miter"/></svg>
<span class="t" style="left:1408.22px;top:58.56px;font-size:12.00px;color:#444;transform:scaleX(0.9949);transform-origin:0 0;">AutoSum</span>
<svg class="a" style="left:1468.00px;top:62.56px;" width="4.89" height="2.89" viewBox="0 0 10 6"><path d="M0 0H10L5 6Z" fill="#777"/></svg>
<svg class="a" style="left:1388.89px;top:77.78px" width="17.78" height="18.89" viewBox="1250.00 70.00 16.00 17.00"><rect x="1251.28" y="71.64" width="12.26" height="13.49" fill="#fff" stroke="#8a8a8a" stroke-width="0.9"/><rect x="1251.28" y="71.64" width="12.26" height="2.70" fill="#6e6e6e"/><path d="M1257.36 75.91L1257.36 82.65M1254.10 79.28L1257.36 82.88 1260.62 79.28" fill="none" stroke="#3b78c4" stroke-width="1.7"/></svg>
<span class="t" style="left:1408.22px;top:81.56px;font-size:12.00px;color:#444;transform:scaleX(0.9278);transform-origin:0 0;">Fill</span>
<svg class="a" style="left:1426.67px;top:86.33px;" width="4.89" height="2.89" viewBox="0 0 10 6"><path d="M0 0H10L5 6Z" fill="#777"/></svg>
<svg class="a" style="left:1388.89px;top:101.11px" width="17.78" height="16.67" viewBox="1250.00 91.00 16.00 15.00"><polygon points="1251.85,100.87 1259.72,93.00 1262.87,95.92 1255.89,103.12" fill="#ee8a9a"/><polygon points="1251.85,100.87 1253.42,99.29 1257.47,101.54 1255.89,103.57 1253.87,103.34" fill="#f7c4cc"/><path d="M1254.77 104.02L1263.54 104.02" stroke="#a0a0a0" stroke-width="0.9"/></svg>
<span class="t" style="left:1408.22px;top:104.68px;font-size:12.00px;color:#444;transform:scaleX(0.9299);transform-origin:0 0;">Clear</span>
<svg class="a" style="left:1438.11px;top:109.44px;" width="4.89" height="2.89" viewBox="0 0 10 6"><path d="M0 0H10L5 6Z" fill="#777"/></svg>
<svg class="a" style="left:1482.22px;top:55.56px" width="33.33" height="32.22" viewBox="1334.00 50.00 30.00 29.00"><text x="1335.61" y="63.43" font-size="13.4" fill="#3b78c4" stroke="#3b78c4" stroke-width="0.45" style="font-family='Liberation Sans',sans-serif">A</text><text x="1335.95" y="76.36" font-size="13.4" fill="#9b4fb4" stroke="#9b4fb4" stroke-width="0.45" style="font-family='Liberation Sans',sans-serif">Z</text><polygon points="1346.40,59.27 1362.03,59.27 1362.03,60.84 1355.96,66.46 1355.96,72.98 1352.14,71.30 1352.14,66.46 1346.40,60.84" fill="#8a8a8a"/></svg>
<span class="t" style="left:1482.11px;top:92.90px;font-size:12.00px;color:#444;transform:scaleX(1.0029);transform-origin:0 0;">Sort &amp;</span>
<span class="t" style="left:1482.11px;top:108.79px;font-size:12.00px;color:#444;transform:scaleX(0.9750);transform-origin:0 0;">Filter</span>
<svg class="a" style="left:1511.33px;top:113.67px;" width="4.89" height="2.89" viewBox="0 0 10 6"><path d="M0 0H10L5 6Z" fill="#777"/></svg>
<svg class="a" style="left:1526.67px;top:57.78px" width="31.11" height="27.78" viewBox="1374.00 52.00 28.00 25.00"><polygon points="1381.48,54.32 1385.98,54.32 1385.98,58.37 1387.11,58.37 1387.11,74.11 1376.43,74.11 1376.43,66.01 1379.80,61.74 1379.80,58.37 1381.48,58.37" fill="#6a6a6a"/><polygon points="1390.48,54.32 1394.98,54.32 1394.98,58.37 1396.44,58.37 1396.44,61.74 1399.59,66.01 1399.59,74.11 1389.36,74.11 1389.36,58.37 1390.48,58.37" fill="#6a6a6a"/><rect x="1386.54" y="61.74" width="3.37" height="4.27" fill="#6a6a6a"/><path d="M1377.77 66.46L1377.77 73.66M1398.24 66.46L1398.24 73.66" stroke="#d0d0d0" stroke-width="0.6"/></svg>
<span class="t" style="left:1524.44px;top:92.90px;font-size:12.00px;color:#444;transform:scaleX(1.0220);transform-origin:0 0;">Find &amp;</span>
<span class="t" style="left:1522.33px;top:108.79px;font-size:12.00px;color:#444;transform:scaleX(0.9295);transform-origin:0 0;">Select</span>
<svg class="a" style="left:1556.33px;top:113.67px;" width="4.89" height="2.89" viewBox="0 0 10 6"><path d="M0 0H10L5 6Z" fill="#777"/></svg>
<span class="t" style="left:1456.44px;top:128.89px;font-size:11.20px;color:#6a6a6a;transform:scaleX(1.0609);transform-origin:0 0;">Editing</span>
<div class="a " style="left:1567.61px;top:54.44px;width:1.00px;height:82.67px;background:#dadada"></div>
<svg class="a" style="left:1661.78px;top:131.56px;" width="8.33" height="5.00" viewBox="0 0 10 6"><path d="M0.8 5.2L5 1L9.2 5.2" fill="none" stroke="#666" stroke-width="1.9"/></svg>
<div class="a " style="left:4.89px;top:153.22px;width:102.00px;height:25.33px;border:1px solid #c6c6c6;box-sizing:border-box;background:#fff"></div>
<span class="t" style="left:12.22px;top:160.68px;font-size:12.00px;color:#444;transform:scaleX(1.0958);transform-origin:0 0;">AM131</span>
<svg class="a" style="left:92.78px;top:163.00px;" width="7.11" height="4.00" viewBox="0 0 10 6"><path d="M0 0H10L5 6Z" fill="#6a6a6a"/></svg>
<div class="a " style="left:121.33px;top:161.11px;width:1.44px;height:1.44px;background:#8a8a8a"></div>
<div class="a " style="left:121.33px;top:164.89px;width:1.44px;height:1.44px;background:#8a8a8a"></div>
<div class="a " style="left:121.33px;top:168.67px;width:1.44px;height:1.44px;background:#8a8a8a"></div>
<div class="a " style="left:136.67px;top:153.22px;width:109.78px;height:25.33px;border:1px solid #c6c6c6;box-sizing:border-box;background:#fff"></div>
<svg class="a" style="left:147.33px;top:158.89px;" width="16.44" height="14.89" viewBox="0 0 16.4 14.9"><path d="M1 1L15.4 13.8M15.4 1L1 13.8" stroke="#b4b4b4" stroke-width="2.2" fill="none"/></svg>
<svg class="a" style="left:182.89px;top:158.22px;" width="20.00" height="16.00" viewBox="0 0 20 16"><path d="M1 9L6.4 14.6L19 1.2" stroke="#c6c6c6" stroke-width="3.2" fill="none"/></svg>
<span class="t" style="left:217.78px;top:151.56px;font-size:24.00px;color:#5c5c5c;font-family:'Liberation Serif',serif;font-style:italic;-webkit-text-stroke:0.45px">f</span>
<span class="t" style="left:227.33px;top:161.00px;font-size:16.50px;color:#5c5c5c;font-family:'Liberation Serif',serif;font-style:italic;-webkit-text-stroke:0.45px">x</span>
<div class="a " style="left:250.22px;top:153.22px;width:1424.56px;height:125.00px;border:1px solid #c6c6c6;box-sizing:border-box;background:#fff"></div>
<svg class="a" style="left:1660.89px;top:162.44px;" width="11.11" height="7.56" viewBox="0 0 10 6.8"><path d="M1 5.8L5 1.8L9 5.8" fill="none" stroke="#6a6a6a" stroke-width="1.9"/></svg>
<div class="a " style="left:1658.89px;top:285.00px;width:21.11px;height:714.22px;background:#fff"></div>
<div class="a " style="left:1662.22px;top:291.89px;width:14.67px;height:707.89px;background:#f1f1f1"></div>
<div class="a " style="left:1662.22px;top:291.89px;width:14.67px;height:14.56px;border:1px solid #ababab;box-sizing:border-box;background:#fff"></div>
<svg class="a" style="left:1666.56px;top:297.33px;" width="6.00" height="3.56" viewBox="0 0 10 6"><path d="M0 6H10L5 0Z" fill="#777"/></svg>
<div class="a " style="left:1662.22px;top:305.44px;width:14.67px;height:459.89px;border:1px solid #ababab;box-sizing:border-box;background:#fff"></div>
<div class="a " style="left:1662.22px;top:985.44px;width:14.67px;height:14.33px;border:1px solid #ababab;box-sizing:border-box;background:#fff"></div>
<svg class="a" style="left:1666.56px;top:990.89px;" width="6.00" height="3.56" viewBox="0 0 10 6"><path d="M0 0H10L5 6Z" fill="#777"/></svg>
<div class="a " style="left:0.00px;top:999.11px;width:1680.00px;height:27.56px;background:#f2f2f2"></div>
<div class="a " style="left:0.00px;top:998.67px;width:1680.00px;height:1.00px;background:#ababab"></div>
<div class="a " style="left:0.00px;top:1025.22px;width:1680.00px;height:1.56px;background:#fbfbfb"></div>
<svg class="a" style="left:26.67px;top:1008.44px;" width="4.44" height="8.00" viewBox="0 0 6 10"><path d="M6 0V10L0 5Z" fill="#c6c6c6"/></svg>
<svg class="a" style="left:55.33px;top:1008.44px;" width="4.44" height="8.00" viewBox="0 0 6 10"><path d="M0 0V10L6 5Z" fill="#c6c6c6"/></svg>
<div class="a " style="left:100.33px;top:998.67px;width:64.56px;height:25.11px;background:#fff;border-left:1px solid #ababab;border-right:1px solid #ababab;border-bottom:2.4px solid #217346;box-sizing:border-box"></div>
<span class="t" style="left:112.00px;top:1006.00px;font-size:13.00px;color:#217346;transform:scaleX(0.9539);transform-origin:0 0;font-weight:bold;">Sheet1</span>
<svg class="a" style="left:198.00px;top:1005.11px;" width="16.00" height="16.00" viewBox="0 0 16 16"><circle cx="8" cy="8" r="7" fill="#fff" stroke="#767676" stroke-width="1.1"/><path d="M4.4 8H11.6M8 4.4V11.6" stroke="#666" stroke-width="1.4"/></svg>
<div class="a " style="left:1008.00px;top:1008.11px;width:1.78px;height:1.78px;background:#a6a6a6"></div>
<div class="a " style="left:1008.00px;top:1012.11px;width:1.78px;height:1.78px;background:#a6a6a6"></div>
<div class="a " style="left:1008.00px;top:1016.11px;width:1.78px;height:1.78px;background:#a6a6a6"></div>
<div class="a " style="left:1025.11px;top:1006.22px;width:633.78px;height:14.67px;background:#e7e7e7"></div>
<div class="a " style="left:1025.11px;top:1006.11px;width:14.44px;height:14.78px;border:1px solid #ababab;box-sizing:border-box;background:#fff"></div>
<svg class="a" style="left:1030.00px;top:1010.00px;" width="4.22" height="7.33" viewBox="0 0 6 10"><path d="M6 0V10L0 5Z" fill="#666"/></svg>
<div class="a " style="left:1476.33px;top:1006.33px;width:153.22px;height:14.56px;border:1px solid #ababab;box-sizing:border-box;background:#fff"></div>
<div class="a " style="left:1644.33px;top:1006.33px;width:14.44px;height:14.56px;border:1px solid #ababab;box-sizing:border-box;background:#fff"></div>
<svg class="a" style="left:1649.78px;top:1010.00px;" width="4.00" height="7.33" viewBox="0 0 6 10"><path d="M0 0V10L6 5Z" fill="#666"/></svg>
<div class="a " style="left:0.00px;top:1026.67px;width:1680.00px;height:23.33px;background:#217346"></div>
<div class="a " style="left:0.00px;top:1048.89px;width:1680.00px;height:1.11px;background:#5f9d7d"></div>
<span class="t" style="left:7.22px;top:1033.13px;font-size:11.48px;color:#fff;transform:scaleX(0.8400);transform-origin:0 0;-webkit-text-stroke:0.1px">READY</span>
<span class="t" style="left:55.56px;top:1033.11px;font-size:11.50px;color:#fff;transform:scaleX(0.9175);transform-origin:0 0;-webkit-text-stroke:0.1px">65 OF 200 RECORDS FOUND</span>
<div class="a " style="left:1388.56px;top:1026.67px;width:37.00px;height:22.22px;background:#185c37"></div>
<svg class="a" style="left:1400.44px;top:1031.33px;" width="13.33" height="12.67" viewBox="0 0 13.4 12.6"><rect x="0.6" y="0.6" width="12.2" height="11.4" fill="none" stroke="#fff" stroke-width="1.2"/><path d="M0.6 4.4H12.8M0.6 8.2H12.8M4.7 0.6V12M8.8 0.6V12" stroke="#fff" stroke-width="1.1"/></svg>
<svg class="a" style="left:1438.00px;top:1031.33px;" width="14.44" height="12.67" viewBox="0 0 14.4 12.6"><rect x="0.6" y="0.6" width="13.2" height="11.4" fill="none" stroke="#e6efe9" stroke-width="1.2"/><rect x="3.6" y="3.2" width="7.2" height="7" fill="none" stroke="#e6efe9" stroke-width="1.1"/><path d="M5.4 5.4H9M5.4 7.6H9" stroke="#e6efe9" stroke-width="1"/></svg>
<svg class="a" style="left:1475.56px;top:1031.33px;" width="14.44" height="12.67" viewBox="0 0 14.4 12.6"><rect x="0.6" y="0.6" width="13.2" height="11.4" fill="none" stroke="#e6efe9" stroke-width="1.2"/><rect x="1.2" y="1.2" width="4.4" height="6.2" fill="#e6efe9"/><rect x="7" y="1.2" width="3" height="6.2" fill="#e6efe9"/></svg>
<div class="a " style="left:1509.56px;top:1037.33px;width:5.33px;height:1.78px;background:#fff"></div>
<div class="a " style="left:1516.67px;top:1037.78px;width:100.00px;height:1.00px;background:#e6efe9"></div>
<div class="a " style="left:1565.11px;top:1031.56px;width:3.33px;height:13.11px;background:#fff"></div>
<div class="a " style="left:1621.33px;top:1037.33px;width:7.33px;height:1.78px;background:#fff"></div>
<div class="a " style="left:1624.11px;top:1034.44px;width:1.78px;height:7.56px;background:#fff"></div>
<span class="t" style="left:1643.22px;top:1033.68px;font-size:11.50px;color:#fff;transform:scaleX(0.9368);transform-origin:0 0;-webkit-text-stroke:0.1px">100%</span>
<div class="a" id="grid" style="left:0;top:289px;width:1659px;height:710px;overflow:hidden;background:#fff">
<div class="a" style="left:0;top:0;width:26px;height:17px;border-right:1px solid #d0d0d0;border-bottom:1px solid #b4b4b4;box-sizing:border-box"></div>
<svg class="a" style="left:13px;top:5px" width="9.5" height="9.5" viewBox="0 0 10 10"><path d="M10 0V10H0Z" fill="#dadada"/></svg>
<div class="a ch" style="left:26px;top:0;width:135px;height:17px;">AF</div>
<div class="a ch" style="left:161px;top:0;width:135px;height:17px;">AG</div>
<div class="a ch" style="left:296px;top:0;width:135px;height:17px;">AH</div>
<div class="a ch" style="left:431px;top:0;width:135px;height:17px;">AI</div>
<div class="a ch" style="left:566px;top:0;width:135px;height:17px;">AJ</div>
<div class="a ch" style="left:701px;top:0;width:135px;height:17px;">AK</div>
<div class="a ch" style="left:836px;top:0;width:158px;height:17px;">AL</div>
<div class="a ch sel" style="left:994px;top:0;width:146px;height:17px;">AM</div>
<div class="a ch" style="left:1140px;top:0;width:135px;height:17px;">AN</div>
<div class="a ch" style="left:1275px;top:0;width:135px;height:17px;">AO</div>
<div class="a ch" style="left:1410px;top:0;width:135px;height:17px;">AP</div>
<div class="a ch" style="left:1545px;top:0;width:135px;height:17px;">AQ</div>
<div class="a row" style="top:17px">
<div class="a rh one gap" style="left:0;width:26px">1</div>
<div class="a c hd" style="left:26px;width:135px"><span class="ht" style="width:117px">6.1. advice from friends</span><div class="a fb"><svg width="15" height="14" viewBox="0 0 15 14"><path d="M3.9 5.2H11.1L7.5 9Z" fill="#5e5e5e"/></svg></div></div>
<div class="a c hd" style="left:161px;width:135px"><span class="ht" style="width:117px">6.2. visit travel fairs</span><div class="a fb"><svg width="15" height="14" viewBox="0 0 15 14"><path d="M3.9 5.2H11.1L7.5 9Z" fill="#5e5e5e"/></svg></div></div>
<div class="a c hd" style="left:296px;width:135px"><span class="ht" style="width:117px">6.3. advice from a travel agent</span><div class="a fb"><svg width="15" height="14" viewBox="0 0 15 14"><path d="M3.9 5.2H11.1L7.5 9Z" fill="#5e5e5e"/></svg></div></div>
<div class="a c hd" style="left:431px;width:135px"><span class="ht" style="width:117px">6.4. information via internet</span><div class="a fb"><svg width="15" height="14" viewBox="0 0 15 14"><path d="M3.9 5.2H11.1L7.5 9Z" fill="#5e5e5e"/></svg></div></div>
<div class="a c hd" style="left:566px;width:135px"><span class="ht" style="width:117px">6.5. available promotions</span><div class="a fb"><svg width="15" height="14" viewBox="0 0 15 14"><path d="M3.9 5.2H11.1L7.5 9Z" fill="#5e5e5e"/></svg></div></div>
<div class="a c hd" style="left:701px;width:135px"><span class="ht" style="width:117px">6.6. article or TV program</span><div class="a fb"><svg width="15" height="14" viewBox="0 0 15 14"><path d="M3.9 5.2H11.1L7.5 9Z" fill="#5e5e5e"/></svg></div></div>
<div class="a c hd" style="left:836px;width:158px"><span class="ht" style="width:140px">7. What overall score would</span><div class="a fb"><svg width="15" height="14" viewBox="0 0 15 14"><path d="M5.2 2.4H14.2V3.2L11 6.4V10.2H8.6V6.4L5.2 3.2Z" fill="#5a5a5a"/><path d="M2.2 8.4H6.6L4.4 11Z" fill="#5a5a5a"/></svg></div></div>
<div class="a c hd" style="left:994px;width:146px"><span class="ht" style="width:128px">8. How likely would you</span><div class="a fb"><svg width="15" height="14" viewBox="0 0 15 14"><path d="M3.9 5.2H11.1L7.5 9Z" fill="#5e5e5e"/></svg></div></div>
<div class="a c hd" style="left:1140px;width:135px"><span class="ht" style="width:117px">9. You rated your last trip</span><div class="a fb"><svg width="15" height="14" viewBox="0 0 15 14"><path d="M3.9 5.2H11.1L7.5 9Z" fill="#5e5e5e"/></svg></div></div>
<div class="a c hd" style="left:1275px;width:135px"><span class="ht" style="width:117px">10. Great! What is</span><div class="a fb"><svg width="15" height="14" viewBox="0 0 15 14"><path d="M3.9 5.2H11.1L7.5 9Z" fill="#5e5e5e"/></svg></div></div>
<div class="a c hd" style="left:1410px;width:135px"><span class="ht" style="width:117px">11.1. My photo:</span><div class="a fb"><svg width="15" height="14" viewBox="0 0 15 14"><path d="M3.9 5.2H11.1L7.5 9Z" fill="#5e5e5e"/></svg></div></div>
<div class="a c hd" style="left:1545px;width:135px"><span class="ht" style="width:117px">12. What was the</span><div class="a fb"><svg width="15" height="14" viewBox="0 0 15 14"><path d="M3.9 5.2H11.1L7.5 9Z" fill="#5e5e5e"/></svg></div></div>
</div>
<div class="a row" style="top:34px">
<div class="a rh gap" style="left:0;width:26px">4</div>
<div class="a c" style="left:26px;width:135px">Not important</div>
<div class="a c" style="left:161px;width:135px">Neutral</div>
<div class="a c" style="left:296px;width:135px">Very important</div>
<div class="a c" style="left:431px;width:135px">Important</div>
<div class="a c" style="left:566px;width:135px">Very important</div>
<div class="a c" style="left:701px;width:135px">Not at all important</div>
<div class="a c n" style="left:836px;width:158px">6</div>
<div class="a c n" style="left:994px;width:146px">5</div>
<div class="a c" style="left:1140px;width:405px">The entertainment was so bad: they should fire them all.</div>
<div class="a c" style="left:1545px;width:135px">a guided tour through the city</div>
</div>
<div class="a row" style="top:51px">
<div class="a rh" style="left:0;width:26px">16</div>
<div class="a c" style="left:26px;width:135px">Very important</div>
<div class="a c" style="left:161px;width:135px">Important</div>
<div class="a c" style="left:296px;width:135px">Important</div>
<div class="a c" style="left:431px;width:135px">Very important</div>
<div class="a c" style="left:566px;width:135px">Important</div>
<div class="a c" style="left:701px;width:135px">Very important</div>
<div class="a c n" style="left:836px;width:158px">8</div>
<div class="a c n" style="left:994px;width:146px">9</div>
<div class="a c" style="left:1140px;width:135px"></div>
<div class="a c" style="left:1275px;width:270px">Very safe venue for children and families</div>
<div class="a c" style="left:1545px;width:135px">The visit at the museum</div>
</div>
<div class="a row" style="top:68px">
<div class="a rh" style="left:0;width:26px">17</div>
<div class="a c" style="left:26px;width:135px">Very important</div>
<div class="a c" style="left:161px;width:135px">Important</div>
<div class="a c" style="left:296px;width:135px">Important</div>
<div class="a c" style="left:431px;width:135px">Very important</div>
<div class="a c" style="left:566px;width:135px">Very important</div>
<div class="a c" style="left:701px;width:135px">Important</div>
<div class="a c n" style="left:836px;width:158px">5</div>
<div class="a c n" style="left:994px;width:146px">3</div>
<div class="a c" style="left:1140px;width:405px">There was too much noise in the hotel neighbourhood.</div>
<div class="a c" style="left:1545px;width:135px">the nice walks on the beach</div>
</div>
<div class="a row" style="top:85px">
<div class="a rh" style="left:0;width:26px">18</div>
<div class="a c" style="left:26px;width:135px">Very important</div>
<div class="a c" style="left:161px;width:135px">N/A</div>
<div class="a c" style="left:296px;width:135px">Not at all important</div>
<div class="a c" style="left:431px;width:135px">Neutral</div>
<div class="a c" style="left:566px;width:135px">Neutral</div>
<div class="a c" style="left:701px;width:135px">Important</div>
<div class="a c n" style="left:836px;width:158px">9</div>
<div class="a c n" style="left:994px;width:146px">10</div>
<div class="a c" style="left:1140px;width:135px"></div>
<div class="a c" style="left:1275px;width:135px">Best hotel ever!</div>
<div class="a c" style="left:1410px;width:135px"></div>
<div class="a c" style="left:1545px;width:135px">A visit to the local castle</div>
</div>
<div class="a row" style="top:102px">
<div class="a rh gap" style="left:0;width:26px">19</div>
<div class="a c" style="left:26px;width:135px">Important</div>
<div class="a c" style="left:161px;width:135px">Important</div>
<div class="a c" style="left:296px;width:135px">Neutral</div>
<div class="a c" style="left:431px;width:135px">Important</div>
<div class="a c" style="left:566px;width:135px">Neutral</div>
<div class="a c" style="left:701px;width:135px">Neutral</div>
<div class="a c n" style="left:836px;width:158px">8</div>
<div class="a c n" style="left:994px;width:146px">7</div>
<div class="a c" style="left:1140px;width:135px"></div>
<div class="a c" style="left:1275px;width:270px">The service is phenomenal. The staff was warm and friendly</div>
<div class="a c" style="left:1545px;width:135px">the whole New York experience</div>
</div>
<div class="a row" style="top:119px">
<div class="a rh" style="left:0;width:26px">32</div>
<div class="a c" style="left:26px;width:135px">Not important</div>
<div class="a c" style="left:161px;width:135px">Not important</div>
<div class="a c" style="left:296px;width:135px">Neutral</div>
<div class="a c" style="left:431px;width:135px">Neutral</div>
<div class="a c" style="left:566px;width:135px">Important</div>
<div class="a c" style="left:701px;width:135px">Important</div>
<div class="a c n" style="left:836px;width:158px">6</div>
<div class="a c n" style="left:994px;width:146px">6</div>
<div class="a c" style="left:1140px;width:405px">We chose the hotel, as it was recommended to us by our travel agent.</div>
<div class="a c" style="left:1545px;width:135px">Paris has good food</div>
</div>
<div class="a row" style="top:136px">
<div class="a rh" style="left:0;width:26px">33</div>
<div class="a c" style="left:26px;width:135px">Neutral</div>
<div class="a c" style="left:161px;width:135px">Neutral</div>
<div class="a c" style="left:296px;width:135px">Neutral</div>
<div class="a c" style="left:431px;width:135px">Not important</div>
<div class="a c" style="left:566px;width:135px">Not important</div>
<div class="a c" style="left:701px;width:135px">Not important</div>
<div class="a c n" style="left:836px;width:158px">6</div>
<div class="a c n" style="left:994px;width:146px">6</div>
<div class="a c" style="left:1140px;width:270px">It's been a terrible experience.</div>
<div class="a c" style="left:1410px;width:135px"></div>
<div class="a c" style="left:1545px;width:135px">nice hotel with good service</div>
</div>
<div class="a row" style="top:153px">
<div class="a rh" style="left:0;width:26px">34</div>
<div class="a c" style="left:26px;width:135px">Not at all important</div>
<div class="a c" style="left:161px;width:135px">Not important</div>
<div class="a c" style="left:296px;width:135px">Neutral</div>
<div class="a c" style="left:431px;width:135px">Neutral</div>
<div class="a c" style="left:566px;width:135px">Neutral</div>
<div class="a c" style="left:701px;width:135px">Neutral</div>
<div class="a c n" style="left:836px;width:158px">8</div>
<div class="a c n" style="left:994px;width:146px">8</div>
<div class="a c" style="left:1140px;width:135px"></div>
<div class="a c" style="left:1275px;width:270px">From the start to finish the customer service was great</div>
<div class="a c" style="left:1545px;width:135px">snowboarding was great</div>
</div>
<div class="a row" style="top:170px">
<div class="a rh" style="left:0;width:26px">35</div>
<div class="a c" style="left:26px;width:135px">Neutral</div>
<div class="a c" style="left:161px;width:135px">Neutral</div>
<div class="a c" style="left:296px;width:135px">Neutral</div>
<div class="a c" style="left:431px;width:135px">Neutral</div>
<div class="a c" style="left:566px;width:135px">Neutral</div>
<div class="a c" style="left:701px;width:135px">Neutral</div>
<div class="a c n" style="left:836px;width:158px">8</div>
<div class="a c n" style="left:994px;width:146px">8</div>
<div class="a c" style="left:1140px;width:135px"></div>
<div class="a c" style="left:1275px;width:270px">The rooms are big and spacious and the air conditioning works</div>
<div class="a c" style="left:1545px;width:135px">lying on the beach all day</div>
</div>
<div class="a row" style="top:187px">
<div class="a rh" style="left:0;width:26px">36</div>
<div class="a c" style="left:26px;width:135px">Neutral</div>
<div class="a c" style="left:161px;width:135px">Neutral</div>
<div class="a c" style="left:296px;width:135px">Neutral</div>
<div class="a c" style="left:431px;width:135px">Neutral</div>
<div class="a c" style="left:566px;width:135px">Neutral</div>
<div class="a c" style="left:701px;width:135px">Neutral</div>
<div class="a c n" style="left:836px;width:158px">7</div>
<div class="a c n" style="left:994px;width:146px">6</div>
<div class="a c" style="left:1140px;width:270px">Foresee more staff at the check-in.</div>
<div class="a c" style="left:1410px;width:135px"></div>
<div class="a c" style="left:1545px;width:135px">the sun, the beach</div>
</div>
<div class="a row" style="top:204px">
<div class="a rh" style="left:0;width:26px">37</div>
<div class="a c" style="left:26px;width:135px">Important</div>
<div class="a c" style="left:161px;width:135px">Important</div>
<div class="a c" style="left:296px;width:135px">Important</div>
<div class="a c" style="left:431px;width:135px">Neutral</div>
<div class="a c" style="left:566px;width:135px">Neutral</div>
<div class="a c" style="left:701px;width:135px">Neutral</div>
<div class="a c n" style="left:836px;width:158px">3</div>
<div class="a c n" style="left:994px;width:146px">3</div>
<div class="a c" style="left:1140px;width:270px">Make the hotel rooms bigger.</div>
<div class="a c" style="left:1410px;width:135px"></div>
<div class="a c" style="left:1545px;width:135px">Rome</div>
</div>
<div class="a row" style="top:221px">
<div class="a rh" style="left:0;width:26px">38</div>
<div class="a c" style="left:26px;width:135px">Important</div>
<div class="a c" style="left:161px;width:135px">Not at all important</div>
<div class="a c" style="left:296px;width:135px">N/A</div>
<div class="a c" style="left:431px;width:135px">Important</div>
<div class="a c" style="left:566px;width:135px">Very important</div>
<div class="a c" style="left:701px;width:135px">Neutral</div>
<div class="a c n" style="left:836px;width:158px">7</div>
<div class="a c n" style="left:994px;width:146px">10</div>
<div class="a c" style="left:1140px;width:405px">We had to wait hours to get tickets. The order process needs a makeover</div>
<div class="a c" style="left:1545px;width:135px">The visit to Barcelona</div>
</div>
<div class="a row" style="top:238px">
<div class="a rh gap" style="left:0;width:26px">39</div>
<div class="a c" style="left:26px;width:135px">Very important</div>
<div class="a c" style="left:161px;width:135px">N/A</div>
<div class="a c" style="left:296px;width:135px">Not at all important</div>
<div class="a c" style="left:431px;width:135px">Very important</div>
<div class="a c" style="left:566px;width:135px">Neutral</div>
<div class="a c" style="left:701px;width:135px">Not at all important</div>
<div class="a c n" style="left:836px;width:158px">7</div>
<div class="a c n" style="left:994px;width:146px">6</div>
<div class="a c" style="left:1140px;width:270px">The slopes were not good.</div>
<div class="a c" style="left:1410px;width:135px"></div>
<div class="a c" style="left:1545px;width:135px">Snowboarding 24/7</div>
</div>
<div class="a row" style="top:255px">
<div class="a rh" style="left:0;width:26px">49</div>
<div class="a c" style="left:26px;width:135px">Not at all important</div>
<div class="a c" style="left:161px;width:135px">Not important</div>
<div class="a c" style="left:296px;width:135px">Not important</div>
<div class="a c" style="left:431px;width:135px">Not important</div>
<div class="a c" style="left:566px;width:135px">Not important</div>
<div class="a c" style="left:701px;width:135px">Not important</div>
<div class="a c n" style="left:836px;width:158px">7</div>
<div class="a c n" style="left:994px;width:146px">7</div>
<div class="a c" style="left:1140px;width:270px">Staff was unfriendly, replace them.</div>
<div class="a c" style="left:1410px;width:135px"></div>
<div class="a c" style="left:1545px;width:135px">i really liked the food</div>
</div>
<div class="a row" style="top:272px">
<div class="a rh" style="left:0;width:26px">50</div>
<div class="a c" style="left:26px;width:135px">Very important</div>
<div class="a c" style="left:161px;width:135px">N/A</div>
<div class="a c" style="left:296px;width:135px">Neutral</div>
<div class="a c" style="left:431px;width:135px">N/A</div>
<div class="a c" style="left:566px;width:135px">Important</div>
<div class="a c" style="left:701px;width:135px">Very important</div>
<div class="a c n" style="left:836px;width:158px">8</div>
<div class="a c n" style="left:994px;width:146px">6</div>
<div class="a c" style="left:1140px;width:135px"></div>
<div class="a c" style="left:1275px;width:270px">Overall we had a wonderful vacation, the hotel was great</div>
<div class="a c" style="left:1545px;width:135px">the drive through the mountains</div>
</div>
<div class="a row" style="top:289px">
<div class="a rh" style="left:0;width:26px">51</div>
<div class="a c" style="left:26px;width:135px">Important</div>
<div class="a c" style="left:161px;width:135px">N/A</div>
<div class="a c" style="left:296px;width:135px">N/A</div>
<div class="a c" style="left:431px;width:135px">Very important</div>
<div class="a c" style="left:566px;width:135px">Very important</div>
<div class="a c" style="left:701px;width:135px">Important</div>
<div class="a c n" style="left:836px;width:158px">7</div>
<div class="a c n" style="left:994px;width:146px">7</div>
<div class="a c" style="left:1140px;width:270px">I like to get all information at my arrival</div>
<div class="a c" style="left:1410px;width:135px"></div>
<div class="a c" style="left:1545px;width:135px">the climbing experience</div>
</div>
<div class="a row" style="top:306px">
<div class="a rh gap" style="left:0;width:26px">52</div>
<div class="a c" style="left:26px;width:135px">Very important</div>
<div class="a c" style="left:161px;width:135px">Not at all important</div>
<div class="a c" style="left:296px;width:135px">Very important</div>
<div class="a c" style="left:431px;width:135px">Neutral</div>
<div class="a c" style="left:566px;width:135px">Important</div>
<div class="a c" style="left:701px;width:135px">Not at all important</div>
<div class="a c n" style="left:836px;width:158px">5</div>
<div class="a c n" style="left:994px;width:146px">2</div>
<div class="a c" style="left:1140px;width:270px">The swimming pool was dirty. Clean it up.</div>
<div class="a c" style="left:1410px;width:135px"></div>
<div class="a c" style="left:1545px;width:135px">The hotel</div>
</div>
<div class="a row" style="top:323px">
<div class="a rh" style="left:0;width:26px">56</div>
<div class="a c" style="left:26px;width:135px">Neutral</div>
<div class="a c" style="left:161px;width:135px">Neutral</div>
<div class="a c" style="left:296px;width:135px">Important</div>
<div class="a c" style="left:431px;width:135px">Important</div>
<div class="a c" style="left:566px;width:135px">Not important</div>
<div class="a c" style="left:701px;width:135px">Not important</div>
<div class="a c n" style="left:836px;width:158px">8</div>
<div class="a c n" style="left:994px;width:146px">9</div>
<div class="a c" style="left:1140px;width:135px"></div>
<div class="a c" style="left:1275px;width:270px">The entertainment team are fantastic</div>
<div class="a c" style="left:1545px;width:135px">canyonning</div>
</div>
<div class="a row" style="top:340px">
<div class="a rh" style="left:0;width:26px">57</div>
<div class="a c" style="left:26px;width:135px">Important</div>
<div class="a c" style="left:161px;width:135px">Important</div>
<div class="a c" style="left:296px;width:135px">Neutral</div>
<div class="a c" style="left:431px;width:135px">Neutral</div>
<div class="a c" style="left:566px;width:135px">Important</div>
<div class="a c" style="left:701px;width:135px">Important</div>
<div class="a c n" style="left:836px;width:158px">6</div>
<div class="a c n" style="left:994px;width:146px">6</div>
<div class="a c" style="left:1140px;width:405px">The aircon was so noisy, we could not use it. It should be repaired.</div>
<div class="a c" style="left:1545px;width:135px">going to the beach</div>
</div>
<div class="a row" style="top:357px">
<div class="a rh" style="left:0;width:26px">58</div>
<div class="a c" style="left:26px;width:135px">Important</div>
<div class="a c" style="left:161px;width:135px">Important</div>
<div class="a c" style="left:296px;width:135px">Neutral</div>
<div class="a c" style="left:431px;width:135px">Neutral</div>
<div class="a c" style="left:566px;width:135px">Important</div>
<div class="a c" style="left:701px;width:135px">Important</div>
<div class="a c n" style="left:836px;width:158px">8</div>
<div class="a c n" style="left:994px;width:146px">7</div>
<div class="a c" style="left:1140px;width:135px"></div>
<div class="a c" style="left:1275px;width:270px">The location of this hotel is perfect for a trip to the city</div>
<div class="a c" style="left:1545px;width:135px">there was a lot of sun</div>
</div>
<div class="a row" style="top:374px">
<div class="a rh" style="left:0;width:26px">59</div>
<div class="a c" style="left:26px;width:135px">Neutral</div>
<div class="a c" style="left:161px;width:135px">Neutral</div>
<div class="a c" style="left:296px;width:135px">Neutral</div>
<div class="a c" style="left:431px;width:135px">Neutral</div>
<div class="a c" style="left:566px;width:135px">Neutral</div>
<div class="a c" style="left:701px;width:135px">Neutral</div>
<div class="a c n" style="left:836px;width:158px">6</div>
<div class="a c n" style="left:994px;width:146px">6</div>
<div class="a c" style="left:1140px;width:405px">The service was rude and we had to wait to check-in because no one was there</div>
<div class="a c" style="left:1545px;width:135px">quad trip</div>
</div>
<div class="a row" style="top:391px">
<div class="a rh" style="left:0;width:26px">60</div>
<div class="a c" style="left:26px;width:135px">Not important</div>
<div class="a c" style="left:161px;width:135px">Not important</div>
<div class="a c" style="left:296px;width:135px">Neutral</div>
<div class="a c" style="left:431px;width:135px">Neutral</div>
<div class="a c" style="left:566px;width:135px">Important</div>
<div class="a c" style="left:701px;width:135px">Important</div>
<div class="a c n" style="left:836px;width:158px">5</div>
<div class="a c n" style="left:994px;width:146px">5</div>
<div class="a c" style="left:1140px;width:405px">We had to wait hours at the airport. They should improve the transportation</div>
<div class="a c" style="left:1545px;width:135px">thalasso therapy</div>
</div>
<div class="a row" style="top:408px">
<div class="a rh" style="left:0;width:26px">61</div>
<div class="a c" style="left:26px;width:135px">Neutral</div>
<div class="a c" style="left:161px;width:135px">Neutral</div>
<div class="a c" style="left:296px;width:135px">Neutral</div>
<div class="a c" style="left:431px;width:135px">Important</div>
<div class="a c" style="left:566px;width:135px">Neutral</div>
<div class="a c" style="left:701px;width:135px">Neutral</div>
<div class="a c n" style="left:836px;width:158px">6</div>
<div class="a c n" style="left:994px;width:146px">6</div>
<div class="a c" style="left:1140px;width:135px"></div>
<div class="a c" style="left:1275px;width:135px"></div>
<div class="a c" style="left:1410px;width:135px"></div>
<div class="a c" style="left:1545px;width:135px">swimming and snorkeling</div>
</div>
<div class="a row" style="top:425px">
<div class="a rh gap" style="left:0;width:26px">62</div>
<div class="a c" style="left:26px;width:135px">Not important</div>
<div class="a c" style="left:161px;width:135px">Not important</div>
<div class="a c" style="left:296px;width:135px">Neutral</div>
<div class="a c" style="left:431px;width:135px">Neutral</div>
<div class="a c" style="left:566px;width:135px">Neutral</div>
<div class="a c" style="left:701px;width:135px">Neutral</div>
<div class="a c n" style="left:836px;width:158px">5</div>
<div class="a c n" style="left:994px;width:146px">5</div>
<div class="a c" style="left:1140px;width:405px">You can't fault this hotel for location but as for everything else. It gets a zero</div>
<div class="a c" style="left:1545px;width:135px">dinner at The Jane</div>
</div>
<div class="a row" style="top:442px">
<div class="a rh" style="left:0;width:26px">65</div>
<div class="a c" style="left:26px;width:135px">Important</div>
<div class="a c" style="left:161px;width:135px">Important</div>
<div class="a c" style="left:296px;width:135px">Important</div>
<div class="a c" style="left:431px;width:135px">Important</div>
<div class="a c" style="left:566px;width:135px">Important</div>
<div class="a c" style="left:701px;width:135px">Important</div>
<div class="a c n" style="left:836px;width:158px">9</div>
<div class="a c n" style="left:994px;width:146px">10</div>
<div class="a c" style="left:1140px;width:135px"></div>
<div class="a c" style="left:1275px;width:270px">The hotel restaurant was great.</div>
<div class="a c" style="left:1545px;width:135px">jetski</div>
</div>
<div class="a row" style="top:459px">
<div class="a rh" style="left:0;width:26px">66</div>
<div class="a c" style="left:26px;width:135px">Important</div>
<div class="a c" style="left:161px;width:135px">Important</div>
<div class="a c" style="left:296px;width:135px">Important</div>
<div class="a c" style="left:431px;width:135px">Important</div>
<div class="a c" style="left:566px;width:135px">Important</div>
<div class="a c" style="left:701px;width:135px">Important</div>
<div class="a c n" style="left:836px;width:158px">7</div>
<div class="a c n" style="left:994px;width:146px">7</div>
<div class="a c" style="left:1140px;width:270px">Longer networking posibilities</div>
<div class="a c" style="left:1410px;width:135px"></div>
<div class="a c" style="left:1545px;width:135px">i really liked visiting the city</div>
</div>
<div class="a row" style="top:476px">
<div class="a rh gap" style="left:0;width:26px">67</div>
<div class="a c" style="left:26px;width:135px">N/A</div>
<div class="a c" style="left:161px;width:135px">Very important</div>
<div class="a c" style="left:296px;width:135px">Very important</div>
<div class="a c" style="left:431px;width:135px">Very important</div>
<div class="a c" style="left:566px;width:135px">Very important</div>
<div class="a c" style="left:701px;width:135px">Very important</div>
<div class="a c n" style="left:836px;width:158px">9</div>
<div class="a c n" style="left:994px;width:146px">9</div>
<div class="a c" style="left:1140px;width:135px"></div>
<div class="a c" style="left:1275px;width:135px">Such a romantic city!</div>
<div class="a c" style="left:1410px;width:135px"></div>
<div class="a c" style="left:1545px;width:135px">the strip in Las Vegas</div>
</div>
<div class="a row" style="top:493px">
<div class="a rh" style="left:0;width:26px">69</div>
<div class="a c" style="left:26px;width:135px">Very important</div>
<div class="a c" style="left:161px;width:135px">Very important</div>
<div class="a c" style="left:296px;width:135px">Very important</div>
<div class="a c" style="left:431px;width:135px">Very important</div>
<div class="a c" style="left:566px;width:135px">Very important</div>
<div class="a c" style="left:701px;width:135px">Very important</div>
<div class="a c n" style="left:836px;width:158px">9</div>
<div class="a c n" style="left:994px;width:146px">9</div>
<div class="a c" style="left:1140px;width:135px"></div>
<div class="a c" style="left:1275px;width:270px">Ibiza is THE party island!</div>
<div class="a c" style="left:1545px;width:135px">the bars and restaurants</div>
</div>
<div class="a row" style="top:510px">
<div class="a rh gap" style="left:0;width:26px">70</div>
<div class="a c" style="left:26px;width:135px">Neutral</div>
<div class="a c" style="left:161px;width:135px">Important</div>
<div class="a c" style="left:296px;width:135px">Neutral</div>
<div class="a c" style="left:431px;width:135px">Neutral</div>
<div class="a c" style="left:566px;width:135px">Neutral</div>
<div class="a c" style="left:701px;width:135px">Important</div>
<div class="a c n" style="left:836px;width:158px">9</div>
<div class="a c n" style="left:994px;width:146px">9</div>
<div class="a c" style="left:1140px;width:135px"></div>
<div class="a c" style="left:1275px;width:270px">The best shops in the world</div>
<div class="a c" style="left:1545px;width:135px">shopping</div>
</div>
<div class="a row" style="top:527px">
<div class="a rh" style="left:0;width:26px">92</div>
<div class="a c" style="left:26px;width:135px">Neutral</div>
<div class="a c" style="left:161px;width:135px">N/A</div>
<div class="a c" style="left:296px;width:135px">Important</div>
<div class="a c" style="left:431px;width:135px">Important</div>
<div class="a c" style="left:566px;width:135px">Neutral</div>
<div class="a c" style="left:701px;width:135px">Important</div>
<div class="a c n" style="left:836px;width:158px">7</div>
<div class="a c n" style="left:994px;width:146px">6</div>
<div class="a c" style="left:1140px;width:270px">Museum rates should be lowered.</div>
<div class="a c" style="left:1410px;width:135px"></div>
<div class="a c" style="left:1545px;width:135px">CITY OF ARTS AND SCIENCES</div>
</div>
<div class="a row" style="top:544px">
<div class="a rh" style="left:0;width:26px">93</div>
<div class="a c" style="left:26px;width:135px">Very important</div>
<div class="a c" style="left:161px;width:135px">Not at all important</div>
<div class="a c" style="left:296px;width:135px">Neutral</div>
<div class="a c" style="left:431px;width:135px">Important</div>
<div class="a c" style="left:566px;width:135px">Important</div>
<div class="a c" style="left:701px;width:135px">Not at all important</div>
<div class="a c n" style="left:836px;width:158px">5</div>
<div class="a c n" style="left:994px;width:146px">5</div>
<div class="a c" style="left:1140px;width:135px"></div>
<div class="a c" style="left:1275px;width:135px"></div>
<div class="a c" style="left:1410px;width:135px"></div>
<div class="a c" style="left:1545px;width:135px">visiting many places</div>
</div>
<div class="a row" style="top:561px">
<div class="a rh" style="left:0;width:26px">94</div>
<div class="a c" style="left:26px;width:135px">Very important</div>
<div class="a c" style="left:161px;width:135px">Not at all important</div>
<div class="a c" style="left:296px;width:135px">Not at all important</div>
<div class="a c" style="left:431px;width:135px">Not at all important</div>
<div class="a c" style="left:566px;width:135px">Not at all important</div>
<div class="a c" style="left:701px;width:135px">Not at all important</div>
<div class="a c n" style="left:836px;width:158px">8</div>
<div class="a c n" style="left:994px;width:146px">7</div>
<div class="a c" style="left:1140px;width:135px"></div>
<div class="a c" style="left:1275px;width:270px">Reception area is lovely and welcoming and the staff is nice</div>
<div class="a c" style="left:1545px;width:135px">camping in the open air</div>
</div>
<div class="a row" style="top:578px">
<div class="a rh" style="left:0;width:26px">95</div>
<div class="a c" style="left:26px;width:135px">Not important</div>
<div class="a c" style="left:161px;width:135px">Not at all important</div>
<div class="a c" style="left:296px;width:135px">Not at all important</div>
<div class="a c" style="left:431px;width:135px">Neutral</div>
<div class="a c" style="left:566px;width:135px">Not at all important</div>
<div class="a c" style="left:701px;width:135px">Not at all important</div>
<div class="a c n" style="left:836px;width:158px">7</div>
<div class="a c n" style="left:994px;width:146px">8</div>
<div class="a c" style="left:1140px;width:270px">Hotel rooms should be bigger</div>
<div class="a c" style="left:1410px;width:135px"></div>
<div class="a c" style="left:1545px;width:135px">being with friends</div>
</div>
<div class="a row" style="top:595px">
<div class="a rh" style="left:0;width:26px">96</div>
<div class="a c" style="left:26px;width:135px">Very important</div>
<div class="a c" style="left:161px;width:135px">Not at all important</div>
<div class="a c" style="left:296px;width:135px">Not at all important</div>
<div class="a c" style="left:431px;width:135px">Important</div>
<div class="a c" style="left:566px;width:135px">Neutral</div>
<div class="a c" style="left:701px;width:135px">Neutral</div>
<div class="a c n" style="left:836px;width:158px">9</div>
<div class="a c n" style="left:994px;width:146px">10</div>
<div class="a c" style="left:1140px;width:135px"></div>
<div class="a c" style="left:1275px;width:135px"></div>
<div class="a c" style="left:1410px;width:135px"></div>
<div class="a c" style="left:1545px;width:135px">the many biketrips</div>
</div>
<div class="a row" style="top:612px">
<div class="a rh" style="left:0;width:26px">97</div>
<div class="a c" style="left:26px;width:135px">Very important</div>
<div class="a c" style="left:161px;width:135px">Not at all important</div>
<div class="a c" style="left:296px;width:135px">Neutral</div>
<div class="a c" style="left:431px;width:135px">Very important</div>
<div class="a c" style="left:566px;width:135px">Not at all important</div>
<div class="a c" style="left:701px;width:135px">Very important</div>
<div class="a c n" style="left:836px;width:158px">8</div>
<div class="a c n" style="left:994px;width:146px">8</div>
<div class="a c" style="left:1140px;width:135px"></div>
<div class="a c" style="left:1275px;width:270px">Great place and wonderful location.</div>
<div class="a c" style="left:1545px;width:135px">visti the Moma in New York</div>
</div>
<div class="a row" style="top:629px">
<div class="a rh" style="left:0;width:26px">98</div>
<div class="a c" style="left:26px;width:135px">Important</div>
<div class="a c" style="left:161px;width:135px">Neutral</div>
<div class="a c" style="left:296px;width:135px">Neutral</div>
<div class="a c" style="left:431px;width:135px">Neutral</div>
<div class="a c" style="left:566px;width:135px">Important</div>
<div class="a c" style="left:701px;width:135px">Not at all important</div>
<div class="a c n" style="left:836px;width:158px">7</div>
<div class="a c n" style="left:994px;width:146px">6</div>
<div class="a c" style="left:1140px;width:270px">It is the worst resort ever.</div>
<div class="a c" style="left:1410px;width:135px"></div>
<div class="a c" style="left:1545px;width:135px">fishing for crabs with the kids</div>
</div>
<div class="a row" style="top:646px">
<div class="a rh" style="left:0;width:26px">99</div>
<div class="a c" style="left:26px;width:135px">Very important</div>
<div class="a c" style="left:161px;width:135px">Important</div>
<div class="a c" style="left:296px;width:135px">Very important</div>
<div class="a c" style="left:431px;width:135px">Neutral</div>
<div class="a c" style="left:566px;width:135px">Important</div>
<div class="a c" style="left:701px;width:135px">Not at all important</div>
<div class="a c n" style="left:836px;width:158px">7</div>
<div class="a c n" style="left:994px;width:146px">8</div>
<div class="a c" style="left:1140px;width:135px">Better swimming pool</div>
<div class="a c" style="left:1275px;width:135px"></div>
<div class="a c" style="left:1410px;width:135px"></div>
<div class="a c" style="left:1545px;width:135px">relaxing at the beach</div>
</div>
<div class="a row" style="top:663px">
<div class="a rh" style="left:0;width:26px">100</div>
<div class="a c" style="left:26px;width:135px">Very important</div>
<div class="a c" style="left:161px;width:135px">Not at all important</div>
<div class="a c" style="left:296px;width:135px">Not at all important</div>
<div class="a c" style="left:431px;width:135px">Not at all important</div>
<div class="a c" style="left:566px;width:135px">Not at all important</div>
<div class="a c" style="left:701px;width:135px">Not at all important</div>
<div class="a c n" style="left:836px;width:158px">8</div>
<div class="a c n" style="left:994px;width:146px">7</div>
<div class="a c" style="left:1140px;width:135px"></div>
<div class="a c" style="left:1275px;width:270px">The cruise was very relaxing</div>
<div class="a c" style="left:1545px;width:135px">spending time with family</div>
</div>
<div class="a row" style="top:680px">
<div class="a rh" style="left:0;width:26px">101</div>
<div class="a c" style="left:26px;width:135px">Very important</div>
<div class="a c" style="left:161px;width:135px">Important</div>
<div class="a c" style="left:296px;width:135px">Important</div>
<div class="a c" style="left:431px;width:135px">Important</div>
<div class="a c" style="left:566px;width:135px">Neutral</div>
<div class="a c" style="left:701px;width:135px">Neutral</div>
<div class="a c n" style="left:836px;width:158px">2</div>
<div class="a c n" style="left:994px;width:146px">0</div>
<div class="a c" style="left:1140px;width:405px">There was not enough snow. They should better use snow cannons.</div>
<div class="a c" style="left:1545px;width:135px">I enjoyed everything</div>
</div>
<div class="a row" style="top:697px">
<div class="a rh" style="left:0;width:26px">102</div>
<div class="a c" style="left:26px;width:135px">Important</div>
<div class="a c" style="left:161px;width:135px">Important</div>
<div class="a c" style="left:296px;width:135px">Neutral</div>
<div class="a c" style="left:431px;width:135px">Important</div>
<div class="a c" style="left:566px;width:135px">Neutral</div>
<div class="a c" style="left:701px;width:135px">Important</div>
<div class="a c n" style="left:836px;width:158px">7</div>
<div class="a c n" style="left:994px;width:146px">6</div>
<div class="a c" style="left:1140px;width:135px">Weather was bad</div>
<div class="a c" style="left:1275px;width:135px"></div>
<div class="a c" style="left:1410px;width:135px"></div>
<div class="a c" style="left:1545px;width:135px">the relaxing vibe over there</div>
</div>
<div class="a" style="left:1658px;top:17px;width:1px;height:1000px;background:#b8b8b8"></div>
</div>
</div></body></html>
